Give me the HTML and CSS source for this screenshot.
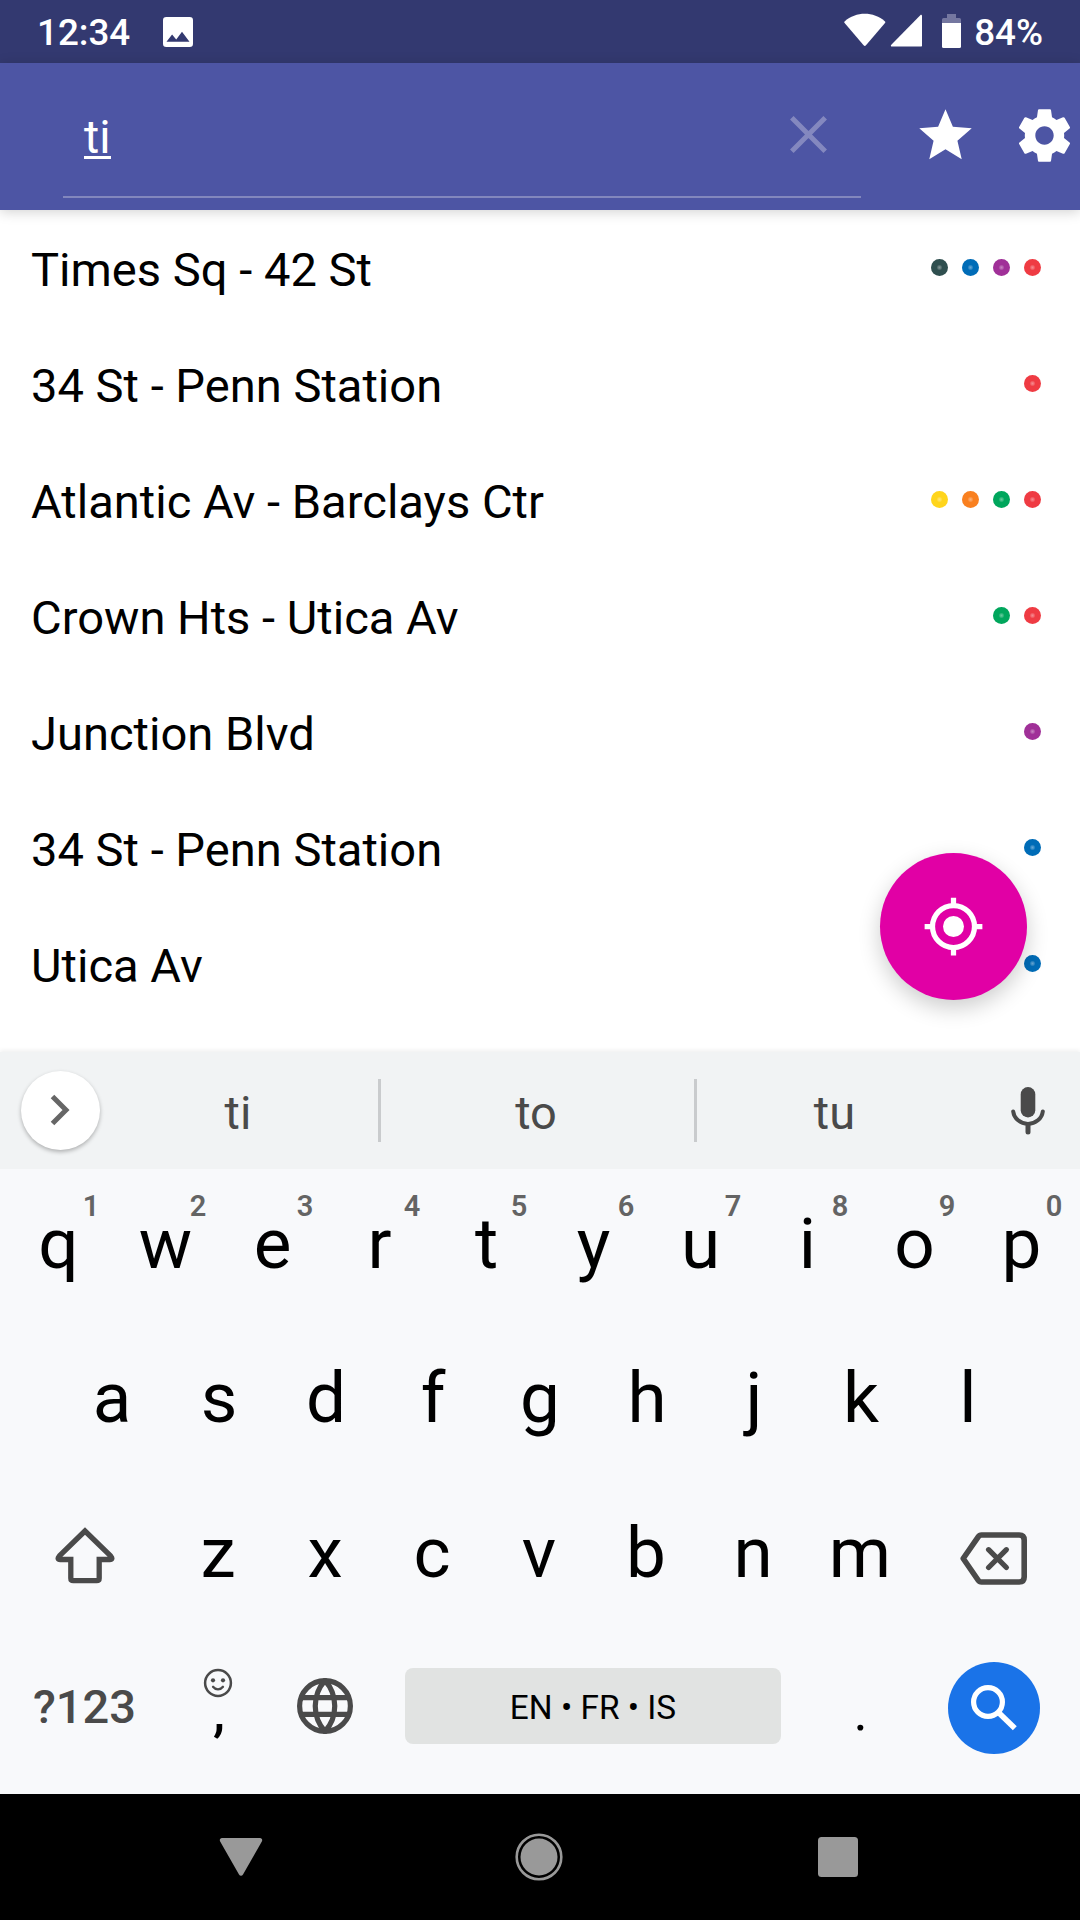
FILE: index.html
```html
<!DOCTYPE html>
<html lang="en">
<head>
  <meta charset="UTF-8" />
  <meta name="viewport" content="width=device-width, initial-scale=1.0">
  <title>Station search</title>
  <link rel="stylesheet" href="styles.css">
</head>
<body>
<div class="screen">
  <div class="status-bar">
    <span class="clock">12:34</span>
    <svg class="picture-icon" width="30" height="30" viewBox="0 0 30 30">
      <path fill="#fff" fill-rule="evenodd" d="M3.3 0h23.4A3.3 3.3 0 0 1 30 3.3v23.4a3.3 3.3 0 0 1-3.3 3.3H3.3A3.3 3.3 0 0 1 0 26.700V3.300A3.300 3.300 0 0 1 3.300 0zM3.500 24.800h23L19 14.800l-5.800 7.700-4.100-5z"/>
    </svg>
    <svg class="system-icons" width="118" height="36" viewBox="0 0 118 36">
      <path fill="#fff" d="M.6 8.500C12 -1.700 29.600 -1.700 41 8.500c.5.500.3 1 0 1.500L22 32.300c-.8.900-1.600.900-2.400 0L.6 10c-.4-.5-.5-1 0-1.500z"/>
      <path fill="#fff" d="M76.300 2.200c.9-.8 1.700-.4 1.700.7v29.600c0 .7-.3 1-1 1H48c-1.200 0-1.500-.9-.7-1.800z"/>
      <path fill="#7477a0" d="M103 1h9v4h3.500a1.500 1.500 0 0 1 1.500 1.500V10H98V6.500A1.500 1.500 0 0 1 99.500 5h3.500z"/>
      <path fill="#fff" d="M98 10h19v23.500a1.500 1.500 0 0 1-1.500 1.500h-16a1.500 1.500 0 0 1-1.500-1.500z"/>
    </svg>
    <span class="battery">84%</span>
  </div>

  <div class="app-bar">
    <div class="search-field">
      <span class="query">ti</span>
      <svg class="clear-icon" width="37" height="37" viewBox="0 0 37 37">
        <path stroke="#8488bf" stroke-width="5" d="M1.800 1.800l33.400 33.400M35.200 1.800L1.800 35.200"/>
      </svg>
    </div>
    <svg class="star-icon" width="63" height="63" viewBox="0 0 24 24">
      <path fill="#fff" d="M12 17.270L18.180 21l-1.640-7.030L22 9.240l-7.190-.61L12 2 9.190 8.630 2 9.240l5.460 4.730L5.820 21z"/>
    </svg>
    <svg class="gear-icon" width="63" height="63" viewBox="0 0 24 24">
      <path fill="#fff" d="M19.430 12.980c.04-.32.07-.64.07-.98s-.03-.66-.07-.98l2.110-1.650c.19-.15.24-.42.12-.64l-2-3.460c-.12-.22-.39-.3-.61-.22l-2.490 1c-.52-.4-1.080-.73-1.690-.98l-.38-2.650C14.460 2.180 14.250 2 14 2h-4c-.25 0-.46.18-.49.42l-.38 2.650c-.61.25-1.170.59-1.690.98l-2.490-1c-.23-.09-.49 0-.61.22l-2 3.460c-.13.22-.07.49.12.64l2.110 1.650c-.04.32-.07.65-.07.98s.03.66.07.98l-2.110 1.650c-.19.15-.24.42-.12.64l2 3.460c.12.22.39.3.61.22l2.490-1c.52.4 1.080.73 1.690.98l.38 2.650c.03.24.24.42.49.42h4c.25 0 .46-.18.49-.42l.38-2.650c.61-.25 1.170-.59 1.690-.98l2.490 1c.23.09.49 0 .61-.22l2-3.460c.12-.22.07-.49-.12-.64l-2.110-1.650zM12 15.500c-1.930 0-3.500-1.570-3.500-3.500s1.570-3.500 3.500-3.500 3.500 1.570 3.500 3.500-1.570 3.500-3.500 3.500z"/>
    </svg>
  </div>

  <div class="stations">
    <div class="station"><span>Times Sq - 42 St</span><div class="lines"><i class="dot shuttle"></i><i class="dot blue"></i><i class="dot purple"></i><i class="dot red"></i></div></div>
    <div class="station"><span>34 St - Penn Station</span><div class="lines"><i class="dot red"></i></div></div>
    <div class="station"><span>Atlantic Av - Barclays Ctr</span><div class="lines"><i class="dot yellow"></i><i class="dot orange"></i><i class="dot green"></i><i class="dot red"></i></div></div>
    <div class="station"><span>Crown Hts - Utica Av</span><div class="lines"><i class="dot green"></i><i class="dot red"></i></div></div>
    <div class="station"><span>Junction Blvd</span><div class="lines"><i class="dot purple"></i></div></div>
    <div class="station"><span>34 St - Penn Station</span><div class="lines"><i class="dot blue"></i></div></div>
    <div class="station"><span>Utica Av</span><div class="lines"><i class="dot blue"></i></div></div>

    <div class="fab">
      <svg width="63" height="63" viewBox="0 0 24 24">
        <circle cx="12" cy="12" r="4" fill="#fff"/>
        <circle cx="12" cy="12" r="8" fill="none" stroke="#fff" stroke-width="2"/>
        <path stroke="#fff" stroke-width="2" d="M12 1v3M12 20v3M1 12h3M20 12h3"/>
      </svg>
    </div>
  </div>

  <div class="suggestions">
    <div class="expand">
      <svg width="20" height="32" viewBox="0 0 20 32">
        <path fill="none" stroke="#666" stroke-width="5" d="M2.500 2.500L16 16 2.500 29.500"/>
      </svg>
    </div>
    <span class="word first">ti</span>
    <span class="word">to</span>
    <span class="word last">tu</span>
    <svg class="mic" width="34" height="48" viewBox="0 0 34 48">
      <rect x="9.700" y="0" width="14.600" height="30.500" rx="7.300" fill="#4a4a4a"/>
      <path fill="none" stroke="#4a4a4a" stroke-width="4" stroke-linecap="round" d="M2.200 24.500a14.900 14 0 0 0 29.600 0"/>
      <path stroke="#4a4a4a" stroke-width="5" stroke-linecap="round" d="M17 39v6"/>
    </svg>
  </div>

  <div class="keyboard">
    <div class="row">
      <div class="key">q<sup>1</sup></div>
      <div class="key">w<sup>2</sup></div>
      <div class="key">e<sup>3</sup></div>
      <div class="key">r<sup>4</sup></div>
      <div class="key">t<sup>5</sup></div>
      <div class="key">y<sup>6</sup></div>
      <div class="key">u<sup>7</sup></div>
      <div class="key">i<sup>8</sup></div>
      <div class="key">o<sup>9</sup></div>
      <div class="key">p<sup>0</sup></div>
    </div>
    <div class="row home">
      <div class="key">a</div>
      <div class="key">s</div>
      <div class="key">d</div>
      <div class="key">f</div>
      <div class="key">g</div>
      <div class="key">h</div>
      <div class="key">j</div>
      <div class="key">k</div>
      <div class="key">l</div>
    </div>
    <div class="row shifted">
      <div class="key wide">
        <svg class="shift" width="60" height="57" viewBox="0 0 60 57">
          <path fill="none" stroke="#4a4a4a" stroke-width="5.300" d="M30 4L4.200 29.200c-1.800 1.900-1.200 3.300 1 3.300H15.800v18.700c0 1.600.9 2.500 2.500 2.500h23.400c1.600 0 2.500-.9 2.500-2.500V32.500h10.600c2.200 0 2.800-1.400 1-3.300z"/>
        </svg>
      </div>
      <div class="key">z</div>
      <div class="key">x</div>
      <div class="key">c</div>
      <div class="key">v</div>
      <div class="key">b</div>
      <div class="key">n</div>
      <div class="key">m</div>
      <div class="key wide">
        <svg class="backspace" width="67" height="53" viewBox="0 0 67 53">
          <path fill="none" stroke="#4a4a4a" stroke-width="5.600" stroke-linejoin="round" d="M21.500 3h37.700c3.200 0 5 1.800 5 5v37c0 3.200-1.800 5-5 5H21.500c-1.500 0-2.500-.6-3.300-1.800L3.200 26.500 18.200 4.800C19 3.600 20 3 21.500 3z"/>
          <path stroke="#4a4a4a" stroke-width="5.300" stroke-linecap="round" d="M28.600 17.700l17.800 17.800M46.400 17.700L28.600 35.500"/>
        </svg>
      </div>
    </div>
    <div class="row bottom">
      <div class="key symbols">?123</div>
      <div class="key comma">
        <svg class="emoji" width="30" height="30" viewBox="0 0 30 30">
          <circle cx="15" cy="15" r="12.900" fill="none" stroke="#4a4a4a" stroke-width="2.500"/>
          <circle cx="10" cy="12.300" r="2.100" fill="#4a4a4a"/>
          <circle cx="20" cy="12.300" r="2.100" fill="#4a4a4a"/>
          <path fill="none" stroke="#4a4a4a" stroke-width="2.300" stroke-linecap="round" d="M10 18.800c2.500 3.300 7.500 3.300 10 0"/>
        </svg>
        ,
      </div>
      <div class="key">
        <svg class="globe" width="56" height="56" viewBox="0 0 56 56">
          <g fill="none" stroke="#4a4a4a" stroke-width="5.200">
            <circle cx="28" cy="28" r="25.400"/>
            <path d="M3.500 19.700h49M3.500 36.300h49"/>
            <path d="M28 2.500C15 17 15 39 28 53.500C41 39 41 17 28 2.500z"/>
          </g>
        </svg>
      </div>
      <div class="space">EN • FR • IS</div>
      <div class="key period">.</div>
      <div class="enter">
        <svg width="46" height="46" viewBox="0 0 46 46">
          <circle cx="17" cy="17" r="14.400" fill="none" stroke="#fff" stroke-width="5.200"/>
          <path stroke="#fff" stroke-width="5.600" d="M27 27l16.800 16.300"/>
          <path stroke="#fff" stroke-width="3" d="M26 29l4-3"/>
        </svg>
      </div>
    </div>
  </div>

  <div class="nav-bar">
    <svg width="44" height="38" viewBox="0 0 44 38">
      <path fill="#999" d="M3 0h38c2 0 2.800 2 1.700 3.800L24 36.500c-1 1.700-3 1.700-4 0L1.300 3.800C.2 2 1 0 3 0z"/>
    </svg>
    <svg class="home-button" width="48" height="48" viewBox="0 0 48 48">
      <circle cx="24" cy="24" r="22.300" fill="none" stroke="#999" stroke-width="2.600"/>
      <circle cx="24" cy="24" r="18.500" fill="#999"/>
    </svg>
    <svg width="40" height="40" viewBox="0 0 40 40">
      <rect width="40" height="40" rx="3.500" fill="#999"/>
    </svg>
  </div>
</div>
</body>
</html>
```

FILE: styles.css
```css
* {
  box-sizing: border-box;
}

body {
  margin: 0;
  font-family: Roboto, "Liberation Sans", sans-serif;
  background: #fff;
  color: #000;
}

svg {
  display: block;
  flex: none;
}

.screen {
  width: 1080px;
  height: 1920px;
  display: flex;
  flex-direction: column;
  overflow: hidden;
}

/* status bar */
.status-bar {
  height: 63px;
  display: flex;
  align-items: flex-start;
  padding: 0 37px 0 37px;
  background: #333970;
  color: #fff;
  font-size: 36.75px;
  font-weight: 500;
  line-height: 66px;
}

.picture-icon {
  margin: 17px 0 0 33px;
}

.system-icons {
  margin: 13px 12px 0 auto;
}

/* app bar */
.app-bar {
  height: 147px;
  display: flex;
  align-items: flex-start;
  padding: 0 4px 0 63px;
  background: #4d55a4;
  color: #fff;
  box-shadow: 0 2px 12px rgba(0, 0, 0, 0.18);
  z-index: 1;
}

.search-field {
  width: 798px;
  height: 135px;
  display: flex;
  align-items: flex-start;
  justify-content: space-between;
  padding: 0 34px 0 21px;
  border-bottom: 2px solid #8287bd;
}

.query {
  margin-top: 46px;
  font-size: 46.5px;
  line-height: 56px;
  height: 50px;
  border-bottom: 3px solid #fff;
}

.clear-icon {
  margin-top: 53px;
}

.star-icon {
  margin: 41px 0 0 53px;
}

.gear-icon {
  margin: 41px 0 0 auto;
}

/* results */
.stations {
  position: relative;
  height: 842px;
  overflow: hidden;
  background: #fff;
}

.station {
  height: 116px;
  display: flex;
  align-items: center;
  justify-content: space-between;
  padding: 3px 39.5px 0 31px;
  font-size: 47.100px;
}

.lines {
  display: flex;
  gap: 14px;
  margin-top: -4px;
}

.dot {
  width: 17px;
  height: 17px;
  border-radius: 50%;
  background: radial-gradient(circle, rgba(255, 255, 255, 0.4) 0, rgba(255, 255, 255, 0.25) 1.5px, transparent 3px) var(--line);
}

.shuttle { --line: #2f4f4f; }
.blue { --line: #006cb7; }
.purple { --line: #a03098; }
.red { --line: #ef3b43; }
.yellow { --line: #ffd51c; }
.orange { --line: #f98020; }
.green { --line: #00a65c; }

.fab {
  position: absolute;
  left: 880px;
  top: 643px;
  width: 147px;
  height: 147px;
  display: flex;
  align-items: center;
  justify-content: center;
  border-radius: 50%;
  background: #e100a5;
  box-shadow: 0 8px 22px rgba(0, 0, 0, 0.2);
}

/* suggestion strip */
.suggestions {
  height: 117px;
  display: flex;
  align-items: center;
  padding: 0 35px 0 21px;
  background: #f1f3f4;
  box-shadow: 0 -2px 4px rgba(0, 0, 0, 0.06);
  color: #4a4a4a;
  z-index: 1;
}

.expand {
  width: 79px;
  height: 79px;
  display: flex;
  align-items: center;
  justify-content: center;
  border-radius: 50%;
  background: #fff;
  box-shadow: 0 2px 4px rgba(0, 0, 0, 0.28);
}

.expand svg {
  margin: 0 1px 1px 0;
}

.word {
  width: 316px;
  height: 63px;
  border-right: 3px solid #c9cbcd;
  padding-right: 3px;
  font-size: 47px;
  line-height: 68px;
  text-align: center;
}

.word.first {
  width: 281px;
  padding-right: 2px;
}

.word.last {
  width: 275px;
  border-right: none;
  padding: 0;
}

.mic {
  margin-left: auto;
}

/* keyboard */
.keyboard {
  position: relative;
  height: 625px;
  padding-top: 2px;
  background: #f8f9fb;
  z-index: 2;
}

.row {
  height: 154.5px;
  display: flex;
  justify-content: center;
}

.key {
  position: relative;
  width: 107px;
  display: flex;
  justify-content: center;
  font-size: 71px;
  line-height: 145px;
}

.key sup {
  position: absolute;
  left: 71px;
  width: 30px;
  top: 15px;
  font-size: 29px;
  font-weight: 600;
  line-height: 40px;
  color: #646464;
  text-align: center;
}

.row.home .key {
  line-height: 143px;
}

.row.shifted {
  padding-right: 2px;
}

.row.shifted .key {
  line-height: 146px;
}

.key.wide {
  width: 160px;
}

.shift {
  margin-top: 47px;
}

.backspace {
  margin-top: 52px;
}

.row.bottom {
  justify-content: flex-start;
  padding-left: 5px;
}

.key.symbols {
  width: 159px;
  font-size: 47px;
  font-weight: 500;
  color: #4a4a4a;
  line-height: 144px;
}

.key.comma,
.key.period {
  line-height: 153px;
  font-size: 54px;
}

.key.comma {
  font-weight: 500;
  padding-left: 3px;
}

.emoji {
  position: absolute;
  left: 39px;
  top: 33px;
}

.globe {
  margin-top: 43px;
}

.space {
  width: 376px;
  height: 76px;
  margin: 33px 26px 0 27px;
  border-radius: 8px;
  background: #e1e3e2;
  font-size: 33.400px;
  line-height: 79px;
  text-align: center;
}

.enter {
  width: 92px;
  height: 92px;
  margin: 27px 0 0 34px;
  display: flex;
  align-items: center;
  justify-content: center;
  border-radius: 50%;
  background: #1a73e8;
}

/* system navigation */
.nav-bar {
  height: 126px;
  display: flex;
  align-items: center;
  justify-content: space-between;
  padding: 0 222px 0 219px;
  background: #000;
}

.home-button {
  margin: 0 3px 1px 0;
}
```
